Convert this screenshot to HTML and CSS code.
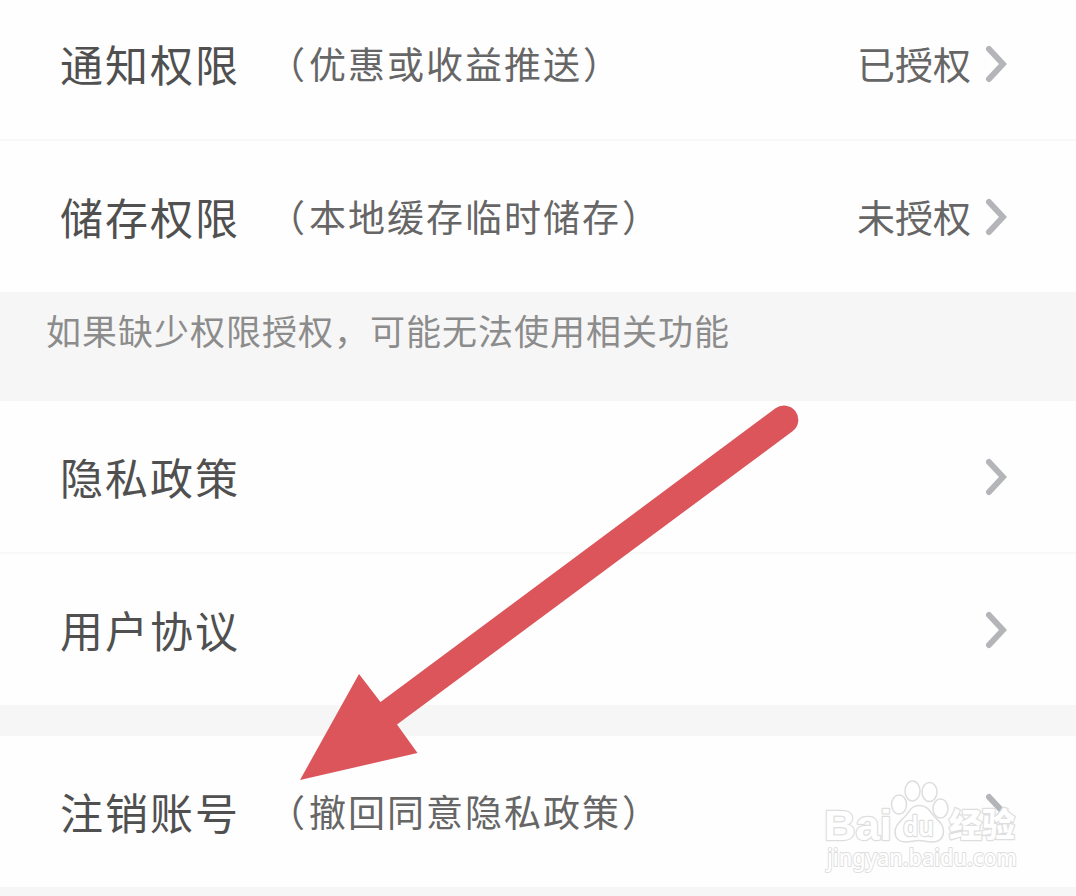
FILE: index.html
```html
<!DOCTYPE html>
<html lang="zh-CN">
<head>
    <meta charset="UTF-8">
    <meta name="viewport" content="width=device-width, initial-scale=1.0">
    <title>权限设置</title>
    <link rel="stylesheet" href="styles.css">
</head>
<body>
    <div class="page">
        <div class="group">
            <div class="row row-first">
                <span class="title">通知权限</span>
                <span class="sub"><span class="open">（</span>优惠或收益推送<span class="close">）</span></span>
                <span class="value">已授权</span>
                <svg class="chevron" width="22" height="38" viewBox="0 0 22 38"><path d="M4 4L18 19L4 34"/></svg>
            </div>
            <div class="row">
                <span class="title">储存权限</span>
                <span class="sub"><span class="open">（</span>本地缓存临时储存<span class="close">）</span></span>
                <span class="value">未授权</span>
                <svg class="chevron" width="22" height="38" viewBox="0 0 22 38"><path d="M4 4L18 19L4 34"/></svg>
            </div>
        </div>
        <p class="note">如果缺少权限授权，可能无法使用相关功能</p>
        <div class="group">
            <div class="row">
                <span class="title">隐私政策</span>
                <svg class="chevron" width="22" height="38" viewBox="0 0 22 38"><path d="M4 4L18 19L4 34"/></svg>
            </div>
            <div class="row">
                <span class="title">用户协议</span>
                <svg class="chevron" width="22" height="38" viewBox="0 0 22 38"><path d="M4 4L18 19L4 34"/></svg>
            </div>
        </div>
        <div class="group group-last">
            <div class="row">
                <span class="title">注销账号</span>
                <span class="sub"><span class="open">（</span>撤回同意隐私政策<span class="close">）</span></span>
                <svg class="chevron" width="22" height="38" viewBox="0 0 22 38"><path d="M4 4L18 19L4 34"/></svg>
            </div>
        </div>

        <svg class="arrow" width="500" height="378" viewBox="300 404 500 378">
            <path d="M300 780L359 674L380.500 702L775.500 408.300A14 14 0 0 1 792.500 431.300L397 724.500L417.500 753Z"/>
        </svg>

        <svg class="watermark" width="210" height="120" viewBox="816 776 210 120">
            <text class="wm-logo" x="824" y="840" textLength="68" lengthAdjust="spacingAndGlyphs">Bai</text>
            <ellipse cx="899" cy="804.500" rx="7.500" ry="9.500"/>
            <ellipse cx="912.500" cy="791" rx="7.500" ry="10"/>
            <ellipse cx="929.500" cy="792" rx="7.500" ry="9.500"/>
            <ellipse cx="940.500" cy="808.500" rx="7.500" ry="9.500"/>
            <path d="M919.500 805.500C927 805.500 930 811 934 816C938 821 944 824 943.500 832C943 839 938 842 932 842C926 842 924 840.500 919 840.500C914 840.500 911 842 906 842C899 842 895 838 895 832C895 824 902 820 905.500 816C910 811 911 805.500 919.500 805.500Z"/>
            <text class="wm-du" x="903" y="836" textLength="31" lengthAdjust="spacingAndGlyphs">du</text>
            <text class="wm-cn" x="949" y="837" textLength="66" lengthAdjust="spacingAndGlyphs">经验</text>
            <text class="wm-url" x="827" y="866" textLength="190" lengthAdjust="spacingAndGlyphs">jingyan.baidu.com</text>
        </svg>
    </div>
</body>
</html>
```

FILE: styles.css
```css
* {
    box-sizing: border-box;
    padding: 0;
    margin: 0;
}

body {
    font-family: "Noto Sans CJK SC", sans-serif;
    background-color: #f6f6f6;
}

.page {
    position: relative;
    height: 896px;
    overflow: hidden;
}

.group {
    background-color: #fefefe;
}

.group-last {
    margin-top: 31px;
}

.row {
    display: flex;
    align-items: center;
    height: 151px;
    padding: 0 69px 0 60px;
    white-space: nowrap;
}

.row + .row {
    height: 153px;
    border-top: 2px solid #f8f8f8;
}

.row-first {
    height: 139px;
    padding-bottom: 12px;
}

.title {
    padding-bottom: 2px;
    font-size: 43px;
    line-height: 60px;
    letter-spacing: 2px;
    color: #505050;
}

.sub {
    margin-left: 28px;
    padding-bottom: 2px;
    font-size: 37px;
    line-height: 60px;
    letter-spacing: 2px;
    color: #666;
}

.sub .open {
    margin-right: 2px;
}

.sub .close {
    margin-left: 1px;
}

.value {
    margin-left: auto;
    margin-right: 14px;
    padding-bottom: 2px;
    font-size: 38px;
    line-height: 60px;
    color: #666;
}

.chevron {
    flex: none;
    margin-left: auto;
}

.value + .chevron {
    margin-left: 0;
}

.chevron path {
    fill: none;
    stroke: #b4b5b9;
    stroke-width: 6;
    stroke-linecap: round;
}

.note {
    height: 109px;
    padding: 8px 46px;
    font-size: 35px;
    line-height: 60px;
    letter-spacing: 1px;
    color: #8c8c8c;
}

.arrow {
    position: absolute;
    left: 300px;
    top: 404px;
    fill: #db555b;
}

/* logo lies over the last row */
.watermark {
    position: absolute;
    left: 816px;
    top: 776px;
    fill: #fff;
    stroke: #dedede;
    stroke-width: 1.5;
}

.watermark text {
    paint-order: stroke;
    stroke-width: 2.5;
    stroke-linejoin: round;
}

.wm-logo {
    font: bold 43px "Liberation Sans", sans-serif;
}

.wm-du {
    font: 600 27px "Noto Sans", sans-serif;
}

.wm-cn {
    font: 900 33px "Noto Sans CJK SC", sans-serif;
}

.watermark .wm-url {
    font: 500 23px "Noto Sans", sans-serif;
    stroke-width: 2;
}
```
